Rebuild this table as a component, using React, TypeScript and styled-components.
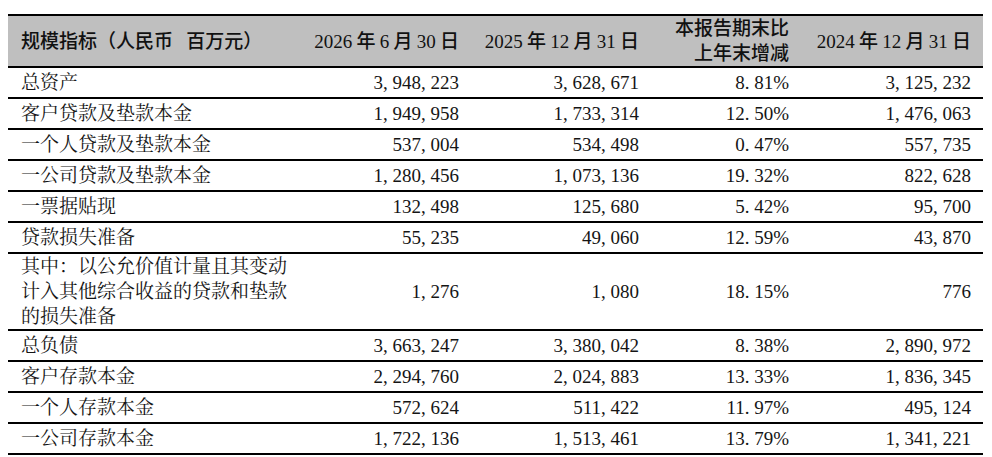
import React from "react";
import styled, { createGlobalStyle } from "styled-components";

const GlobalStyle = createGlobalStyle`
  html, body {
    margin: 0;
    padding: 0;
    background: #ffffff;
  }
  body {
    font-family: "Liberation Serif", "Noto Serif CJK SC", "Noto Sans CJK SC", serif;
    color: #151515;
    text-spacing-trim: space-all;
  }
`;

const Page = styled.div`
  padding: 14px 9px 0 8px;
  width: 992px;
  box-sizing: border-box;
`;

const Table = styled.div`
  width: 975px;
  border-top: 2px solid #000;
  display: flex;
  flex-direction: column;
`;

const cols = "300px 163px 180px 150px 182px";

const HeadRow = styled.div`
  display: grid;
  grid-template-columns: ${cols};
  align-items: center;
  min-height: 48px;
  background: #bfbfbf;
  border-bottom: 2px solid #000;
  font-family: "Liberation Serif", "Noto Sans CJK SC", sans-serif;
  font-weight: 500;
  font-size: 19px;
  line-height: 25px;
  color: #111;
`;

const Row = styled.div<{ $tall?: boolean }>`
  display: grid;
  grid-template-columns: ${cols};
  align-items: center;
  min-height: ${(p) => (p.$tall ? 75 : 29)}px;
  border-bottom: 2px solid #000;
  font-size: 19px;
  line-height: 25px;
`;

const LabelCell = styled.div`
  padding: 0 18px 0 13px;
  text-align: left;
`;

const HeadLabel = styled.div`
  padding: 0 18px 0 13px;
  text-align: left;
  white-space: nowrap;
`;

const Gap = styled.span`
  display: inline-block;
  width: 0.7em;
`;

const NumCell = styled.div`
  padding: 0 12px 0 4px;
  text-align: right;
  white-space: nowrap;
`;

const HeadCell = styled.div<{ $date?: boolean }>`
  padding: 0 12px 0 0;
  text-align: right;
  white-space: nowrap;
  word-spacing: ${(p) => (p.$date ? "-0.5px" : "0")};
`;

const Punct = styled.span`
  display: inline-block;
  width: 0.5em;
  text-align: left;
`;

const Num: React.FC<{ v: string }> = ({ v }) => {
  const parts: React.ReactNode[] = [];
  let buf = "";
  v.split("").forEach((ch, i) => {
    if (ch === "," || ch === ".") {
      if (buf) parts.push(buf);
      buf = "";
      parts.push(<Punct key={i}>{ch}</Punct>);
    } else {
      buf += ch;
    }
  });
  if (buf) parts.push(buf);
  return <>{parts}</>;
};

const rows: string[][] = [
  ["总资产", "3,948,223", "3,628,671", "8.81%", "3,125,232"],
  ["客户贷款及垫款本金", "1,949,958", "1,733,314", "12.50%", "1,476,063"],
  ["一个人贷款及垫款本金", "537,004", "534,498", "0.47%", "557,735"],
  ["一公司贷款及垫款本金", "1,280,456", "1,073,136", "19.32%", "822,628"],
  ["一票据贴现", "132,498", "125,680", "5.42%", "95,700"],
  ["贷款损失准备", "55,235", "49,060", "12.59%", "43,870"],
  [
    "其中：以公允价值计量且其变动计入其他综合收益的贷款和垫款的损失准备",
    "1,276",
    "1,080",
    "18.15%",
    "776",
  ],
  ["总负债", "3,663,247", "3,380,042", "8.38%", "2,890,972"],
  ["客户存款本金", "2,294,760", "2,024,883", "13.33%", "1,836,345"],
  ["一个人存款本金", "572,624", "511,422", "11.97%", "495,124"],
  ["一公司存款本金", "1,722,136", "1,513,461", "13.79%", "1,341,221"],
];

export default function App() {
  return (
    <Page>
      <GlobalStyle />
      <Table>
        <HeadRow>
          <HeadLabel>
            规模指标（人民币<Gap />百万元）
          </HeadLabel>
          <HeadCell $date>2026 年 6 月 30 日</HeadCell>
          <HeadCell $date>2025 年 12 月 31 日</HeadCell>
          <HeadCell>
            本报告期末比
            <br />
            上年末增减
          </HeadCell>
          <HeadCell $date>2024 年 12 月 31 日</HeadCell>
        </HeadRow>
        {rows.map((r, i) => (
          <Row key={i} $tall={r[0].length > 20}>
            <LabelCell>{r[0]}</LabelCell>
            {r.slice(1).map((v, j) => (
              <NumCell key={j}>
                <Num v={v} />
              </NumCell>
            ))}
          </Row>
        ))}
      </Table>
    </Page>
  );
}
